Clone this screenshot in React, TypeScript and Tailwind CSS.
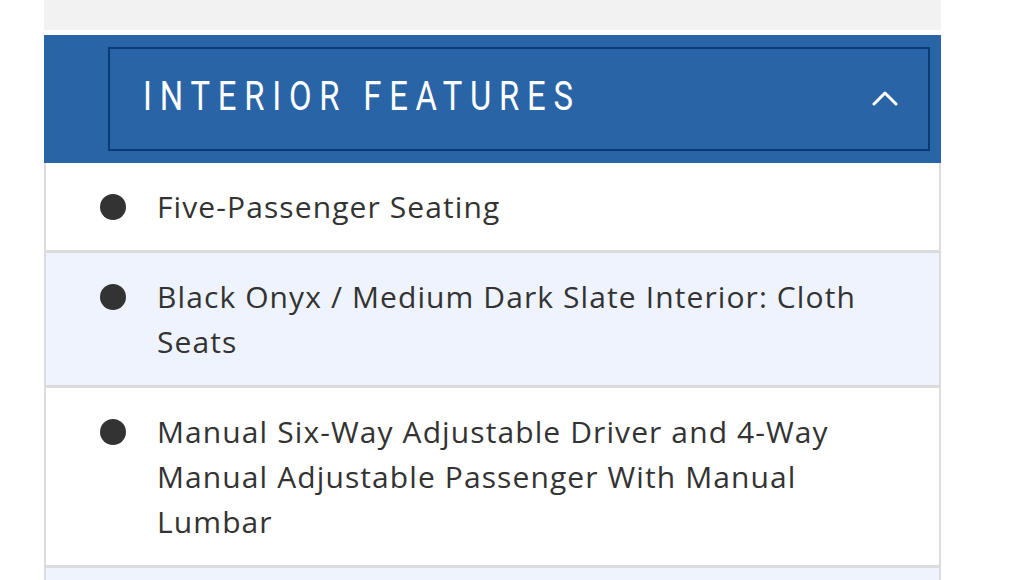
import React from "react";

const items = [
  { text: "Five-Passenger Seating", alt: false },
  { text: "Black Onyx / Medium Dark Slate Interior: Cloth Seats", alt: true },
  { text: "Manual Six-Way Adjustable Driver and 4-Way Manual Adjustable Passenger With Manual Lumbar", alt: false },
];

export default function App() {
  return (
    <div className="w-[1009px] h-[580px] bg-white overflow-hidden" style={{ fontFamily: "'Open Sans', 'Noto Sans', sans-serif" }}>
      <div className="ml-[44px] w-[897px]">
        <div className="h-[30px] bg-[#f2f2f2]" />
        <div className="h-[5px]" />
        <div className="bg-[#2964a6] h-[128px] pl-[64px] pr-[11px] py-[12px]">
          <div className="h-full border-2 border-[#0c3a75] flex items-center justify-between pl-[33px] pr-[30px]">
            <span className="text-white text-[40px] leading-none tracking-[9.5px] font-normal [font-family:'Roboto',sans-serif] scale-x-[0.82] origin-left inline-block whitespace-nowrap -mt-[4px]">
              INTERIOR FEATURES
            </span>
            <svg width="26" height="18" viewBox="0 0 26 18" fill="none" className="-mt-[2px]">
              <path d="M2 15 L13 4 L24 15" stroke="white" strokeWidth="3" strokeLinecap="round" strokeLinejoin="round" />
            </svg>
          </div>
        </div>
        <ul className="border-x-2 border-[#dcdcdc]">
          {items.map((it, i) => (
            <li
              key={i}
              className={`flex items-start pl-[54px] pr-[40px] py-[21px] border-b-[3px] border-[#dcdcdc] ${it.alt ? "bg-[#eef3fd]" : "bg-white"}`}
            >
              <span className="h-[45px] flex items-center shrink-0">
                <span className="block w-[26px] h-[26px] rounded-full bg-[#333333]" />
              </span>
              <span className="ml-[31px] text-[#333333] text-[30px] leading-[45px] tracking-[1.1px]">
                {it.text}
              </span>
            </li>
          ))}
          <li className="h-[60px] bg-[#eef3fd]" />
        </ul>
      </div>
    </div>
  );
}
